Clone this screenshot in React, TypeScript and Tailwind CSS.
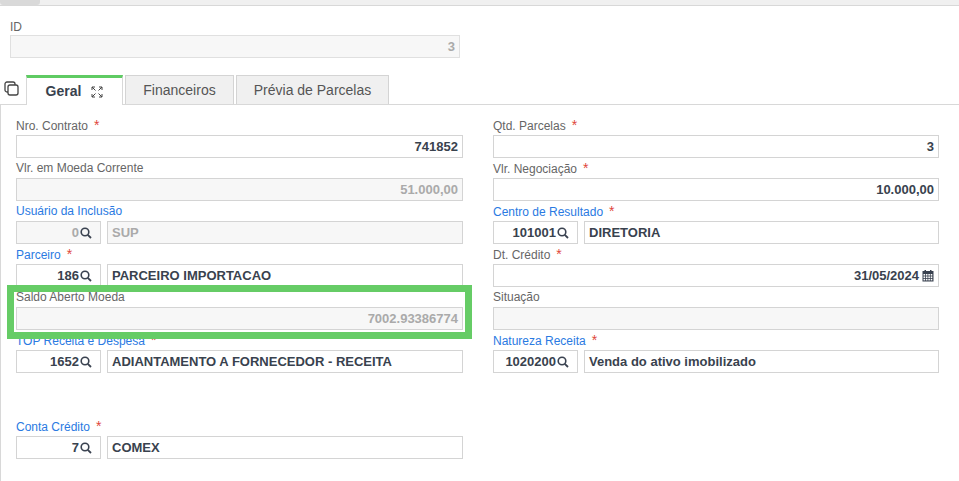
import React from "react";

const Star = () => <span className="text-[#e0463a] ml-[6px] text-[14px]">*</span>;

const Search = () => (
  <svg width="12" height="12" viewBox="0 0 12 12" className="ml-[1px]">
    <circle cx="5" cy="5" r="3.8" fill="none" stroke="#3a4250" strokeWidth="1.6" />
    <line x1="7.8" y1="7.8" x2="11" y2="11" stroke="#3a4250" strokeWidth="1.8" />
  </svg>
);

const Cal = () => (
  <svg width="12" height="12" viewBox="0 0 12 12" className="ml-[3px]">
    <rect x="0.5" y="1" width="11" height="10.5" fill="#3a4250" />
    <rect x="2.5" y="0" width="1.5" height="2" fill="#3a4250" />
    <rect x="8" y="0" width="1.5" height="2" fill="#3a4250" />
    {[0, 1, 2].map((r) =>
      [0, 1, 2, 3].map((c) => (
        <rect key={r + "-" + c} x={1.5 + c * 2.4} y={4 + r * 2.4} width="1.6" height="1.6" fill="#fff" />
      ))
    )}
  </svg>
);

type F = {
  label: string;
  blue?: boolean;
  req?: boolean;
  value?: string;
  disabled?: boolean;
  code?: string;
  desc?: string;
  cal?: boolean;
};

function Field({ f }: { f: F }) {
  return (
    <div className="h-[43px] flex flex-col">
      <div className={`h-[20px] text-[12px] leading-[20px] ${f.blue ? "text-[#2a7ae2]" : "text-[#666]"}`}>
        {f.label}
        {f.req && <Star />}
      </div>
      {f.code !== undefined ? (
        <div className="flex gap-[6px] h-[23px]">
          <div
            className={`w-[85px] border border-[#d4d4d4] flex items-center justify-end pr-[8px] text-[13px] font-bold ${
              f.disabled ? "bg-[#f7f7f7] text-[#aaa]" : "bg-white text-[#39424e]"
            }`}
          >
            {f.code}
            <Search />
          </div>
          <div
            className={`flex-1 border border-[#d4d4d4] flex items-center pl-[4px] text-[13px] font-bold ${
              f.disabled ? "bg-[#f7f7f7] text-[#aaa]" : "bg-white text-[#39424e]"
            }`}
          >
            {f.desc}
          </div>
        </div>
      ) : (
        <div
          className={`h-[23px] border border-[#d4d4d4] flex items-center justify-end pr-[4px] text-[13px] font-bold ${
            f.disabled ? "bg-[#f7f7f7] text-[#aaa]" : "bg-white text-[#39424e]"
          }`}
        >
          {f.value}
          {f.cal && <Cal />}
        </div>
      )}
    </div>
  );
}

const left: (F | null)[] = [
  { label: "Nro. Contrato", req: true, value: "741852" },
  { label: "Vlr. em Moeda Corrente", value: "51.000,00", disabled: true },
  { label: "Usuário da Inclusão", blue: true, code: "0", desc: "SUP", disabled: true },
  { label: "Parceiro", blue: true, req: true, code: "186", desc: "PARCEIRO IMPORTACAO" },
  { label: "Saldo Aberto Moeda", value: "7002.93386774", disabled: true },
  { label: "TOP Receita e Despesa", blue: true, req: true, code: "1652", desc: "ADIANTAMENTO A FORNECEDOR - RECEITA" },
  null,
  { label: "Conta Crédito", blue: true, req: true, code: "7", desc: "COMEX" },
];
const right: F[] = [
  { label: "Qtd. Parcelas", req: true, value: "3" },
  { label: "Vlr. Negociação", req: true, value: "10.000,00" },
  { label: "Centro de Resultado", blue: true, req: true, code: "101001", desc: "DIRETORIA" },
  { label: "Dt. Crédito", req: true, value: "31/05/2024", cal: true },
  { label: "Situação", disabled: true, value: "" },
  { label: "Natureza Receita", blue: true, req: true, code: "1020200", desc: "Venda do ativo imobilizado" },
];

export default function App() {
  return (
    <div className="w-[959px] h-[481px] bg-white overflow-hidden relative" style={{ fontFamily: '"Liberation Sans", Arial, sans-serif' }}>
      <div className="h-[6px] bg-[#f0f0f0] border-b border-[#d8d8d8] relative">
        <div className="absolute left-0 top-0 w-[40px] h-[5px] bg-[#d9d9d9] rounded-b-[3px]" />
      </div>
      <div className="px-[10px] pt-[12px]">
        <div className="text-[12px] text-[#666] h-[17px]">ID</div>
        <div className="w-[450px] h-[23px] border border-[#e0e0e0] bg-[#f7f7f7] flex items-center justify-end pr-[4px] text-[13px] font-bold text-[#aaa]">3</div>
      </div>
      <div className="mt-[17px] flex items-end h-[29px] relative">
        <div className="w-[26px] h-full flex items-start pl-[4px] pt-[6px]">
          <svg width="16" height="16" viewBox="0 0 16 16">
            <rect x="1" y="1" width="10" height="10" rx="2" fill="none" stroke="#444" strokeWidth="1.3" />
            <rect x="4" y="4" width="10" height="10" rx="2" fill="white" stroke="#444" strokeWidth="1.3" />
          </svg>
        </div>
        <div className="w-[97px] h-[30px] bg-white border-t-[3px] border-[#5fcb63] border-x border-x-[#d8d8d8] flex items-center justify-center gap-[10px] text-[14px] font-bold text-[#39424e] relative z-10 -mb-[1px]">
          Geral
          <svg width="12" height="12" viewBox="0 0 12 12" fill="none" stroke="#444" strokeWidth="1">
            <path d="M1 4V1h3M8 1h3v3M11 8v3H8M4 11H1V8M1 1l3.5 3.5M11 1L7.5 4.5M11 11L7.5 7.5M1 11l3.5-3.5" />
          </svg>
        </div>
        <div className="ml-[2px] w-[109px] h-[29px] bg-[#f0f0f0] border border-[#d4d4d4] border-b-0 flex items-center justify-center text-[14px] text-[#555]">Financeiros</div>
        <div className="ml-[2px] w-[153px] h-[29px] bg-[#f0f0f0] border border-[#d4d4d4] border-b-0 flex items-center justify-center text-[14px] text-[#555]">Prévia de Parcelas</div>
      </div>
      <div className="border-t border-l border-[#d8d8d8] h-[400px] pt-[10px] pl-[15px] flex gap-[30px]">
        <div className="w-[447px] flex flex-col">
          {left.map((f, i) => (f ? <Field key={i} f={f} /> : <div key={i} className="h-[43px]" />))}
        </div>
        <div className="w-[446px] flex flex-col">
          {right.map((f, i) => (
            <Field key={i} f={f} />
          ))}
        </div>
      </div>
      <div className="absolute left-[7px] top-[285px] w-[465px] h-[54px] border-[7px] border-[#66cc66]" />
    </div>
  );
}
